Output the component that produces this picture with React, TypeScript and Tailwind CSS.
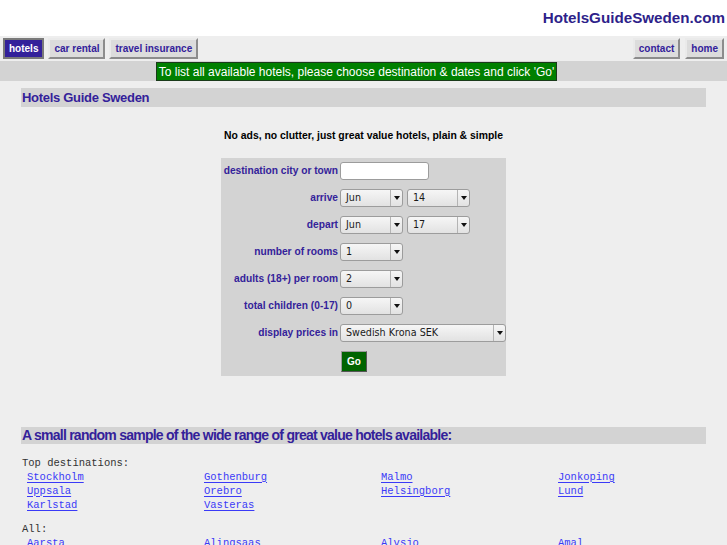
import React from 'react';

const arial = "font-['Liberation_Sans',Arial,sans-serif]";
const dejavu = "font-['DejaVu_Sans',Verdana,sans-serif]";
const mono = "font-['Liberation_Mono','Courier_New',monospace]";

const NavButton: React.FC<{ label: string; active?: boolean }> = ({ label, active }) => (
    <a
        href="#"
        className={
            active
                ? `h-[21px] px-[4px] flex items-center border-2 border-[#7a7a7a] bg-[#33219a] text-white text-[10px] font-bold ${arial}`
                : `h-[21px] px-[4px] flex items-center border-2 border-t-[#eaeaea] border-l-[#eaeaea] border-r-[#8c8c8c] border-b-[#8c8c8c] bg-[#dcdcdc] text-[#33219a] text-[10px] font-bold ${arial}`
        }
    >
        {label}
    </a>
);

const FakeSelect: React.FC<{ value: string; width: string }> = ({ value, width }) => (
    <div
        className={`${width} h-[18px] flex items-stretch rounded-[3px] border border-[#9c9c9c] bg-gradient-to-b from-[#f6f6f6] to-[#e2e2e2] text-[#1a1a1a] ${dejavu} text-[9.6px]`}
    >
        <span className="flex-1 flex items-center pl-[5px] pt-[1px]">{value}</span>
        <span className="w-[12px] flex items-center justify-center border-l border-[#b4b4b4]">
            <svg width="6" height="4" viewBox="0 0 6 4">
                <path d="M0 0 L6 0 L3 4 Z" fill="#111" />
            </svg>
        </span>
    </div>
);

const FormRow: React.FC<{ label: string; children: React.ReactNode }> = ({ label, children }) => (
    <>
        <div className={`h-[18px] flex items-center justify-end text-[10.2px] font-bold text-[#33229a] ${arial} whitespace-nowrap`}>
            {label}
        </div>
        <div className="h-[18px] flex items-center gap-[4px]">{children}</div>
    </>
);

const topDestinations = [
    'Stockholm', 'Gothenburg', 'Malmo', 'Jonkoping',
    'Uppsala', 'Orebro', 'Helsingborg', 'Lund',
    'Karlstad', 'Vasteras',
];

const allDestinations = ['Aarsta', 'Alingsaas', 'Alvsjo', 'Amal'];

const LinkGrid: React.FC<{ items: string[] }> = ({ items }) => (
    <div className="grid grid-cols-[177px_177px_177px_1fr] pl-[5px]">
        {items.map((name) => (
            <a key={name} href="#" className="h-[14px] leading-[14px] text-[#3a3af7] underline underline-offset-2">
                {name}
            </a>
        ))}
    </div>
);

export default function App() {
    return (
        <div className={`min-h-[545px] bg-[#eeeeee] ${arial}`}>
            {/* site title */}
            <div className="h-[36px] bg-white flex items-center justify-end pr-[2px] pt-[1px]">
                <span className="text-[15.2px] font-bold text-[#2e1f8a]">HotelsGuideSweden.com</span>
            </div>

            {/* nav */}
            <div className="h-[25px] flex items-center justify-between px-[3px] bg-[#eeeeee]">
                <div className="flex items-center gap-[4px]">
                    <NavButton label="hotels" active />
                    <NavButton label="car rental" />
                    <NavButton label="travel insurance" />
                </div>
                <div className="flex items-center gap-[5px]">
                    <NavButton label="contact" />
                    <NavButton label="home" />
                </div>
            </div>

            {/* notice */}
            <div className="h-[20px] bg-[#d3d3d3] flex justify-center pr-[14px] pt-[1px]">
                <div className="h-[19px] px-[2px] flex items-center border border-[#1a3a1a] bg-[#008000] text-white text-[12px]">
                    To list all available hotels, please choose destination &amp; dates and click 'Go'
                </div>
            </div>

            <div className="px-[21px] pt-[7px]">
                <div className="h-[19px] flex items-center pl-[1px] bg-[#d3d3d3] text-[13px] font-bold text-[#33219a] tracking-[-0.3px]">
                    Hotels Guide Sweden
                </div>

                <p className="mt-[21px] text-center text-[10.4px] font-bold text-black">
                    No ads, no clutter, just great value hotels, plain &amp; simple
                </p>

                {/* search form */}
                <div className="mt-[14px] mx-auto w-[285px] bg-[#d3d3d3] pl-[1px] pt-[4px] pb-[4px]">
                    <div className="grid grid-cols-[116px_166px] gap-x-[2px] gap-y-[9px]">
                        <FormRow label="destination city or town">
                            <div className="w-[89px] h-[18px] rounded-[3px] border border-[#9c9c9c] bg-white" />
                        </FormRow>
                        <FormRow label="arrive">
                            <FakeSelect value="Jun" width="w-[63px]" />
                            <FakeSelect value="14" width="w-[63px]" />
                        </FormRow>
                        <FormRow label="depart">
                            <FakeSelect value="Jun" width="w-[63px]" />
                            <FakeSelect value="17" width="w-[63px]" />
                        </FormRow>
                        <FormRow label="number of rooms">
                            <FakeSelect value="1" width="w-[63px]" />
                        </FormRow>
                        <FormRow label="adults (18+) per room">
                            <FakeSelect value="2" width="w-[63px]" />
                        </FormRow>
                        <FormRow label="total children (0-17)">
                            <FakeSelect value="0" width="w-[63px]" />
                        </FormRow>
                        <FormRow label="display prices in">
                            <FakeSelect value="Swedish Krona SEK" width="w-[166px]" />
                        </FormRow>
                        <div />
                        <div>
                            <button
                                className="ml-[1px] w-[26px] h-[21px] flex items-center justify-center border border-t-[#9a9a9a] border-l-[#9a9a9a] border-r-[#555] border-b-[#555] bg-[#006400] text-white text-[10px] font-bold"
                            >
                                Go
                            </button>
                        </div>
                    </div>
                </div>

                {/* sample listings */}
                <div className="mt-[51px] h-[17px] flex items-center pl-[1px] bg-[#d3d3d3] text-[14px] font-bold text-[#33219a] tracking-[-0.75px]">
                    A small random sample of the wide range of great value hotels available:
                </div>

                <div className={`${mono} text-[10.5px] pl-[1px] pt-[12px]`}>
                    <div className="h-[14px] leading-[14px] text-[#333]">Top destinations:</div>
                    <LinkGrid items={topDestinations} />
                    <div className="h-[10px]" />
                    <div className="h-[14px] leading-[14px] text-[#333]">All:</div>
                    <LinkGrid items={allDestinations} />
                </div>
            </div>
        </div>
    );
}
